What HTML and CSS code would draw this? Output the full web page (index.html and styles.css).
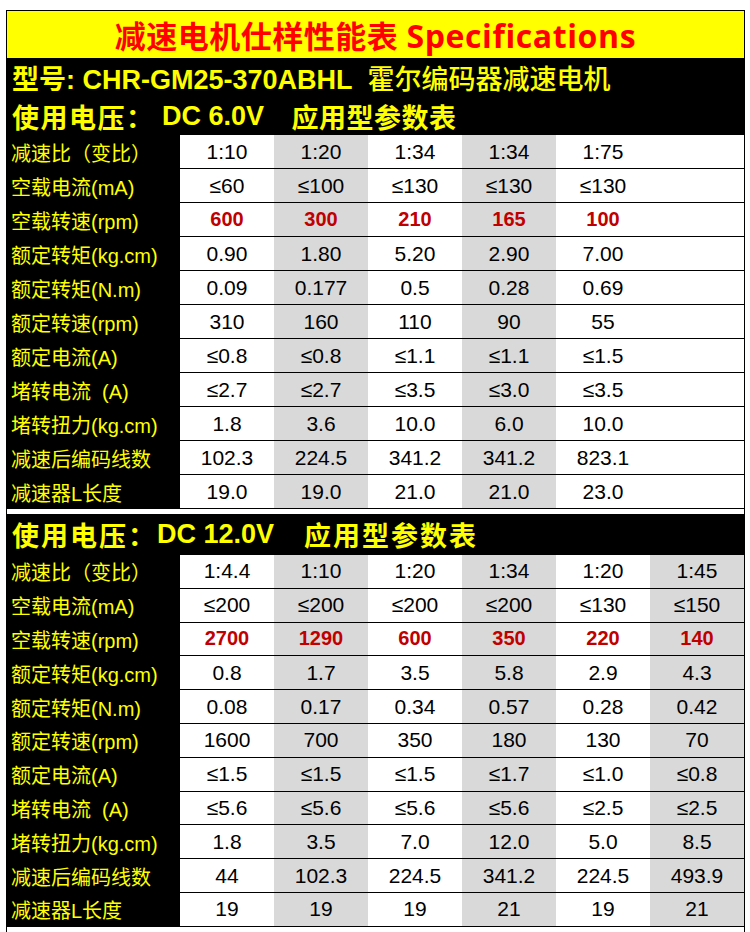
FILE: index.html
```html
<!DOCTYPE html>
<html lang="zh-CN">
<head>
<meta charset="utf-8">
<title>减速电机仕样性能表 Specifications</title>
<link rel="stylesheet" href="styles.css">
</head>
<body>
<div class="sheet">
  <div class="title"><span class="title-cn">减速电机仕样性能表</span>&nbsp;<span class="title-en">Specifications</span></div>
  <div class="model"><span>型号: CHR-GM25-370ABHL&nbsp; </span><span class="model-cn">霍尔编码器减速电机</span></div>
  <div class="volt"><span class="cjk">使用电压：</span><span class="lat"> DC 6.0V&nbsp;&nbsp;&nbsp;</span><span class="cjk tail-cjk">应用型参数表</span></div>
  <div class="grid t1">
    <div class="lab">减速比（变比）</div><div class="c">1:10</div><div class="c g">1:20</div><div class="c">1:34</div><div class="c g">1:34</div><div class="c">1:75</div><div class="c"></div>
    <div class="lab">空载电流(mA)</div><div class="c">≤60</div><div class="c g">≤100</div><div class="c">≤130</div><div class="c g">≤130</div><div class="c">≤130</div><div class="c"></div>
    <div class="lab">空载转速(rpm)</div><div class="c r">600</div><div class="c g r">300</div><div class="c r">210</div><div class="c g r">165</div><div class="c r">100</div><div class="c"></div>
    <div class="lab">额定转矩(kg.cm)</div><div class="c">0.90</div><div class="c g">1.80</div><div class="c">5.20</div><div class="c g">2.90</div><div class="c">7.00</div><div class="c"></div>
    <div class="lab">额定转矩(N.m)</div><div class="c">0.09</div><div class="c g">0.177</div><div class="c">0.5</div><div class="c g">0.28</div><div class="c">0.69</div><div class="c"></div>
    <div class="lab">额定转速(rpm)</div><div class="c">310</div><div class="c g">160</div><div class="c">110</div><div class="c g">90</div><div class="c">55</div><div class="c"></div>
    <div class="lab">额定电流(A)</div><div class="c">≤0.8</div><div class="c g">≤0.8</div><div class="c">≤1.1</div><div class="c g">≤1.1</div><div class="c">≤1.5</div><div class="c"></div>
    <div class="lab">堵转电流&nbsp;&nbsp;(A)</div><div class="c">≤2.7</div><div class="c g">≤2.7</div><div class="c">≤3.5</div><div class="c g">≤3.0</div><div class="c">≤3.5</div><div class="c"></div>
    <div class="lab">堵转扭力(kg.cm)</div><div class="c">1.8</div><div class="c g">3.6</div><div class="c">10.0</div><div class="c g">6.0</div><div class="c">10.0</div><div class="c"></div>
    <div class="lab">减速后编码线数</div><div class="c">102.3</div><div class="c g">224.5</div><div class="c">341.2</div><div class="c g">341.2</div><div class="c">823.1</div><div class="c"></div>
    <div class="lab">减速器L长度</div><div class="c">19.0</div><div class="c g">19.0</div><div class="c">21.0</div><div class="c g">21.0</div><div class="c">23.0</div><div class="c"></div>
  </div>
  <div class="gap"></div>
  <div class="volt v2"><span class="cjk">使用电压：</span><span class="lat">DC 12.0V&nbsp;&nbsp;&nbsp;&nbsp;</span><span class="cjk">应用型参数表</span></div>
  <div class="grid t2">
    <div class="lab">减速比（变比）</div><div class="c">1:4.4</div><div class="c g">1:10</div><div class="c">1:20</div><div class="c g">1:34</div><div class="c">1:20</div><div class="c g">1:45</div>
    <div class="lab">空载电流(mA)</div><div class="c">≤200</div><div class="c g">≤200</div><div class="c">≤200</div><div class="c g">≤200</div><div class="c">≤130</div><div class="c g">≤150</div>
    <div class="lab">空载转速(rpm)</div><div class="c r">2700</div><div class="c g r">1290</div><div class="c r">600</div><div class="c g r">350</div><div class="c r">220</div><div class="c g r">140</div>
    <div class="lab">额定转矩(kg.cm)</div><div class="c">0.8</div><div class="c g">1.7</div><div class="c">3.5</div><div class="c g">5.8</div><div class="c">2.9</div><div class="c g">4.3</div>
    <div class="lab">额定转矩(N.m)</div><div class="c">0.08</div><div class="c g">0.17</div><div class="c">0.34</div><div class="c g">0.57</div><div class="c">0.28</div><div class="c g">0.42</div>
    <div class="lab">额定转速(rpm)</div><div class="c">1600</div><div class="c g">700</div><div class="c">350</div><div class="c g">180</div><div class="c">130</div><div class="c g">70</div>
    <div class="lab">额定电流(A)</div><div class="c">≤1.5</div><div class="c g">≤1.5</div><div class="c">≤1.5</div><div class="c g">≤1.7</div><div class="c">≤1.0</div><div class="c g">≤0.8</div>
    <div class="lab">堵转电流&nbsp;&nbsp;(A)</div><div class="c">≤5.6</div><div class="c g">≤5.6</div><div class="c">≤5.6</div><div class="c g">≤5.6</div><div class="c">≤2.5</div><div class="c g">≤2.5</div>
    <div class="lab">堵转扭力(kg.cm)</div><div class="c">1.8</div><div class="c g">3.5</div><div class="c">7.0</div><div class="c g">12.0</div><div class="c">5.0</div><div class="c g">8.5</div>
    <div class="lab">减速后编码线数</div><div class="c">44</div><div class="c g">102.3</div><div class="c">224.5</div><div class="c g">341.2</div><div class="c">224.5</div><div class="c g">493.9</div>
    <div class="lab">减速器L长度</div><div class="c">19</div><div class="c g">19</div><div class="c">19</div><div class="c g">21</div><div class="c">19</div><div class="c g">21</div>
  </div>
  <div class="tail"></div>
</div>
</body>
</html>
```

FILE: styles.css
```css
* { box-sizing: border-box; }
html, body { margin: 0; padding: 0; background: #ffffff; }
body { overflow: hidden; }

.sheet {
  margin: 10px 0 0 6px;
  width: 739px;
  border: 1px solid #000;
  background: #000;
  font-family: "Liberation Sans", "Noto Sans CJK SC", sans-serif;
}

.title {
  height: 47px;
  background: #ffff00;
  color: #ff0000;
  font-weight: bold;
  font-size: 31px;
  line-height: 47px;
  text-align: center;
  white-space: nowrap;
  font-family: "Open Sans", "Noto Sans CJK SC", sans-serif;
}
.title-cn { font-family: "Noto Sans CJK SC", sans-serif; letter-spacing: 0.5px; }
.title-en { font-family: "Open Sans", sans-serif; font-size: 32px; letter-spacing: 0.6px; }

.model {
  height: 39px;
  padding-left: 5px;
  display: flex;
  align-items: center;
  color: #ffff00;
  font-weight: bold;
  font-size: 27px;
  white-space: pre;
}
.model-cn { font-weight: 500; }

.volt {
  height: 38px;
  padding-left: 5px;
  display: flex;
  align-items: center;
  color: #ffff00;
  font-weight: bold;
  font-size: 27px;
  white-space: pre;
}
.volt .cjk { letter-spacing: 1.5px; }
.volt .tail-cjk { margin-left: 5px; letter-spacing: 0.5px; }
.volt.v2 { height: 41px; }
.volt.v2 .cjk { letter-spacing: 2px; }

.grid {
  display: grid;
  grid-template-columns: 173px repeat(6, 94px);
  grid-auto-rows: 34px;
}
.grid.t2 { grid-auto-rows: 33.8px; }

.lab {
  background: #000;
  color: #ffff00;
  font-size: 20px;
  padding-left: 4px;
  display: flex;
  align-items: center;
  white-space: nowrap;
}

.c {
  background: #ffffff;
  color: #000;
  font-size: 21px;
  border-bottom: 1px solid #000;
  display: flex;
  align-items: center;
  justify-content: center;
}
.c.g { background: #d9d9d9; }
.c.r { color: #c00000; font-weight: bold; font-size: 20px; }

.gap { height: 5px; background: #ffffff; }
.tail { height: 20px; background: #ffffff; }
```
